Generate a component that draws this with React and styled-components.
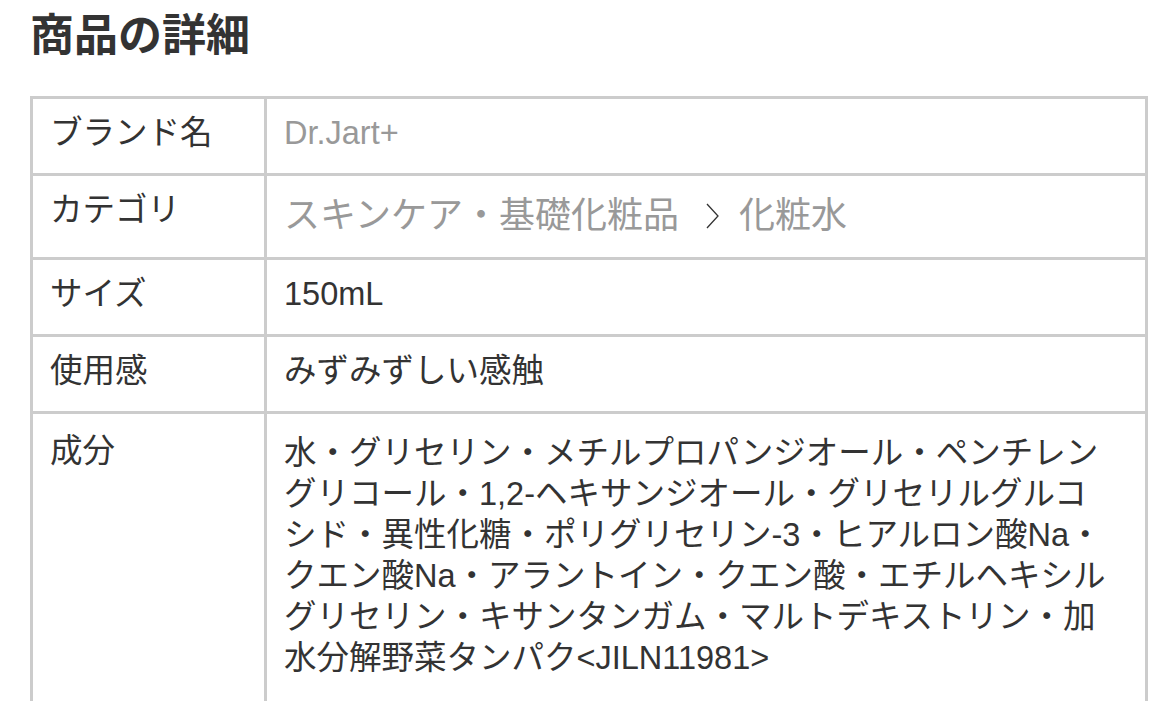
import React from 'react';
import styled, { createGlobalStyle } from 'styled-components';

const GlobalStyle = createGlobalStyle`
  * {
    margin: 0;
    padding: 0;
    box-sizing: border-box;
  }

  body {
    font-family: 'Liberation Sans', 'Noto Sans CJK JP', sans-serif;
    background: #fff;
    color: #333;
    overflow: hidden;
  }
`;

const Page = styled.div`
  padding-left: 30px;
  width: 1161px;
`;

const Title = styled.h2`
  font-size: 44px;
  line-height: 57px;
  font-weight: bold;
  color: #333;
  margin-top: 7px;
  margin-bottom: 32px;
`;

const Table = styled.div`
  width: 1118px;
  border: 3px solid #ccc;
  border-bottom: none;
`;

const Row = styled.div`
  display: grid;
  grid-template-columns: 234px 1fr;
  border-bottom: 3px solid #ccc;
`;

const Label = styled.div`
  border-right: 3px solid #ccc;
  padding: ${p => p.$top || '14px'} 17px 19px;
  font-size: 32.5px;
  line-height: 41px;
  color: #333;
`;

const Value = styled.div`
  padding: ${p => p.$pad || '14px 17px 19px'};
  font-size: ${p => p.$size || '32.5px'};
  line-height: ${p => p.$lh || '41px'};
  color: ${p => (p.$muted ? '#999' : '#333')};
  display: flex;
  flex-direction: column;
`;

const Crumbs = styled.div`
  display: flex;
  align-items: center;
`;

const Chevron = styled.svg`
  width: 13px;
  height: 26px;
  margin: 0 20px 0 27px;
  flex: none;
`;

const Line = styled.span`
  white-space: nowrap;
`;

const ingredients = [
  '水・グリセリン・メチルプロパンジオール・ペンチレン',
  'グリコール・1,2-ヘキサンジオール・グリセリルグルコ',
  'シド・異性化糖・ポリグリセリン-3・ヒアルロン酸Na・',
  'クエン酸Na・アラントイン・クエン酸・エチルヘキシル',
  'グリセリン・キサンタンガム・マルトデキストリン・加',
  '水分解野菜タンパク<JILN11981>',
];

const App = () => (
  <>
    <GlobalStyle />
    <Page>
      <Title>商品の詳細</Title>
      <Table>
        <Row>
          <Label>ブランド名</Label>
          <Value $muted>Dr.Jart+</Value>
        </Row>
        <Row>
          <Label>カテゴリ</Label>
          <Value $muted $size="36px" $lh="48px" $pad="16px 17px 17px">
            <Crumbs>
              <span>スキンケア・基礎化粧品</span>
              <Chevron viewBox="0 0 13 26">
                <polyline points="1,1 12,13 1,25" fill="none" stroke="#333" strokeWidth="1.3" />
              </Chevron>
              <span>化粧水</span>
            </Crumbs>
          </Value>
        </Row>
        <Row>
          <Label>サイズ</Label>
          <Value>150mL</Value>
        </Row>
        <Row>
          <Label>使用感</Label>
          <Value>みずみずしい感触</Value>
        </Row>
        <Row>
          <Label $top="17px">成分</Label>
          <Value $pad="19px 17px 60px">
            {ingredients.map(l => (
              <Line key={l}>{l}</Line>
            ))}
          </Value>
        </Row>
      </Table>
    </Page>
  </>
);

export default App;
